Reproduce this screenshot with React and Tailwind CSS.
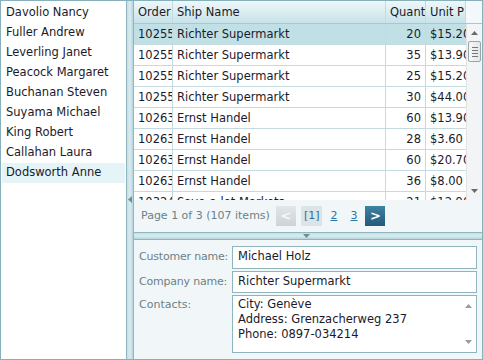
import React from 'react';

const EMPLOYEES = [
  'Davolio Nancy', 'Fuller Andrew', 'Leverling Janet', 'Peacock Margaret',
  'Buchanan Steven', 'Suyama Michael', 'King Robert', 'Callahan Laura', 'Dodsworth Anne',
];

const ORDERS = [
  ['10255', 'Richter Supermarkt', '20', '$15.20'],
  ['10255', 'Richter Supermarkt', '35', '$13.90'],
  ['10255', 'Richter Supermarkt', '25', '$15.20'],
  ['10255', 'Richter Supermarkt', '30', '$44.00'],
  ['10263', 'Ernst Handel', '60', '$13.90'],
  ['10263', 'Ernst Handel', '28', '$3.60'],
  ['10263', 'Ernst Handel', '60', '$20.70'],
  ['10263', 'Ernst Handel', '36', '$8.00'],
  ['10324', 'Save-a-lot Markets', '21', '$12.90'],
];

function Arrow({ dir = 'up', className = '' }) {
  const d = dir === 'up' ? 'M0 4 L3.5 0 L7 4 Z' : dir === 'down' ? 'M0 0 L3.5 4 L7 0 Z' : 'M4 0 L0 3.5 L4 7 Z';
  const w = dir === 'left' ? 4 : 7;
  const h = dir === 'left' ? 7 : 4;
  return (
    <svg width={w} height={h} viewBox={`0 0 ${w} ${h}`} className={className}>
      <path d={d} fill="currentColor" />
    </svg>
  );
}

function Cell({ children, className = '' }) {
  return <div className={`h-full px-[4px] pt-[1px] flex items-center overflow-hidden whitespace-nowrap border-r border-[#c3dbe0] ${className}`}>{children}</div>;
}

export default function App() {
  return (
    <div className="w-[483px] h-[360px] flex bg-white border border-[#86b0ba] text-[11.5px] text-[#1a1a2a]" style={{ fontFamily: '"DejaVu Sans", Verdana, sans-serif' }}>
      <aside className="w-[125px] pt-[2px] flex flex-col">
        {EMPLOYEES.map((name, i) => (
          <div key={name} className={`h-[20px] px-[4px] flex items-center mx-[1px] whitespace-nowrap ${i === EMPLOYEES.length - 1 ? 'bg-[#e5f4f6]' : ''}`}>{name}</div>
        ))}
      </aside>

      <div className="w-[8px] flex items-center justify-center border-l border-r border-[#8fb6bf] bg-gradient-to-r from-[#c5e0e6] via-[#d9ecf0] to-[#b5d5dc] text-[#6c8f98]">
        <Arrow dir="left" className="mt-[38px]" />
      </div>

      <div className="flex-1 flex flex-col min-w-0">
        <div className="h-[199px] flex flex-col overflow-hidden">
          <div className="h-[23px] flex bg-gradient-to-b from-[#eef8fa] to-[#c7e3e9] border-b border-[#a6c9d1] shrink-0">
            <Cell className="w-[39px] border-[#a6c9d1]">Order</Cell>
            <Cell className="w-[213px] border-[#a6c9d1]">Ship Name</Cell>
            <Cell className="w-[40px] border-[#a6c9d1]">Quant</Cell>
            <Cell className="w-[40px] border-[#a6c9d1]">Unit P</Cell>
            <div className="flex-1 bg-[#f3f9fa]" />
          </div>
          <div className="flex flex-1 min-h-0">
            <div className="flex-1 overflow-hidden">
              {ORDERS.map((r, i) => (
                <div key={i} className={`h-[21px] flex border-b border-[#c3dbe0] ${i === 0 ? 'bg-[#c1e0e6]' : 'bg-white'}`}>
                  <Cell className="w-[39px] shrink-0">{r[0]}</Cell>
                  <Cell className="w-[213px] shrink-0">{r[1]}</Cell>
                  <Cell className="w-[40px] shrink-0 justify-end">{r[2]}</Cell>
                  <Cell className="w-[40px] shrink-0 border-r-0">{r[3]}</Cell>
                </div>
              ))}
            </div>
            <div className="w-[16px] shrink-0 bg-[#f2f4f5] border-l border-[#dfe5e7] flex flex-col items-center justify-between py-[7px] text-[#6b6b6b]">
              <div className="flex flex-col items-center gap-[6px]">
                <Arrow dir="up" />
                <div className="w-[13px] h-[21px] rounded-[2px] border border-[#9aa4a8] bg-gradient-to-r from-[#f7f7f7] to-[#e3e6e8] flex flex-col items-center justify-center gap-[2px]">
                  <div className="w-[6px] h-px bg-[#777]" />
                  <div className="w-[6px] h-px bg-[#777]" />
                  <div className="w-[6px] h-px bg-[#777]" />
                  <div className="w-[6px] h-px bg-[#777]" />
                </div>
              </div>
              <Arrow dir="down" />
            </div>
          </div>
        </div>

        <div className="h-[32px] flex items-center pl-[7px] bg-[#f1f7f9] text-[#6e7f85] text-[11px] gap-[4px] whitespace-nowrap">
          <span className="mr-[2px]">Page 1 of 3 (107 items)</span>
          <div className="w-[20px] h-[20px] flex items-center justify-center bg-gradient-to-b from-[#e2e6e8] to-[#cdd3d6] text-white text-[13px]">&lt;</div>
          <div className="h-[20px] px-[3px] flex items-center bg-[#dde4e7] text-[#2f6f9f] ml-[1px]">[1]</div>
          <span className="text-[#2e73a6] underline ml-[4px]">2</span>
          <span className="text-[#2e73a6] underline ml-[9px]">3</span>
          <div className="w-[20px] h-[20px] ml-[4px] flex items-center justify-center bg-gradient-to-b from-[#3e82a3] to-[#215a78] text-white text-[13px] font-bold">&gt;</div>
        </div>

        <div className="h-[8px] flex justify-center items-center border-t border-b border-[#8fb6bf] bg-gradient-to-b from-[#c5e0e6] via-[#d9ecf0] to-[#b5d5dc] text-[#6c8f98]">
          <Arrow dir="down" className="ml-[-4px]" />
        </div>

        <div className="flex-1 bg-[#f1f7f9] px-[5px] pt-[5px] text-[#6e7f85]">
          <div className="flex items-center h-[24px]">
            <span className="w-[93px] shrink-0 whitespace-nowrap text-[11px] tracking-[-0.2px]">Customer name:</span>
            <div className="flex-1 h-[23px] bg-white border border-[#8fb6bf] px-[5px] flex items-center text-[#1a1a2a]">Michael Holz</div>
          </div>
          <div className="flex items-center h-[24px] mt-[1px]">
            <span className="w-[93px] shrink-0 whitespace-nowrap text-[11px] tracking-[-0.2px]">Company name:</span>
            <div className="flex-1 h-[22px] bg-white border border-[#8fb6bf] px-[5px] flex items-center text-[#1a1a2a]">Richter Supermarkt</div>
          </div>
          <div className="flex items-start mt-[1px]">
            <span className="w-[93px] shrink-0 pt-[2px] whitespace-nowrap text-[11px]">Contacts:</span>
            <div className="flex-1 h-[58px] bg-white border border-[#8fb6bf] flex text-[#1a1a2a]">
              <div className="flex-1 pl-[5px] pt-[1px] leading-[15px]">
                <div>City: Genève</div>
                <div>Address: Grenzacherweg 237</div>
                <div>Phone: 0897-034214</div>
              </div>
              <div className="w-[16px] flex flex-col items-center justify-between py-[8px] text-[#9a9a9a]">
                <Arrow dir="up" />
                <Arrow dir="down" />
              </div>
            </div>
          </div>
        </div>
      </div>
    </div>
  );
}
